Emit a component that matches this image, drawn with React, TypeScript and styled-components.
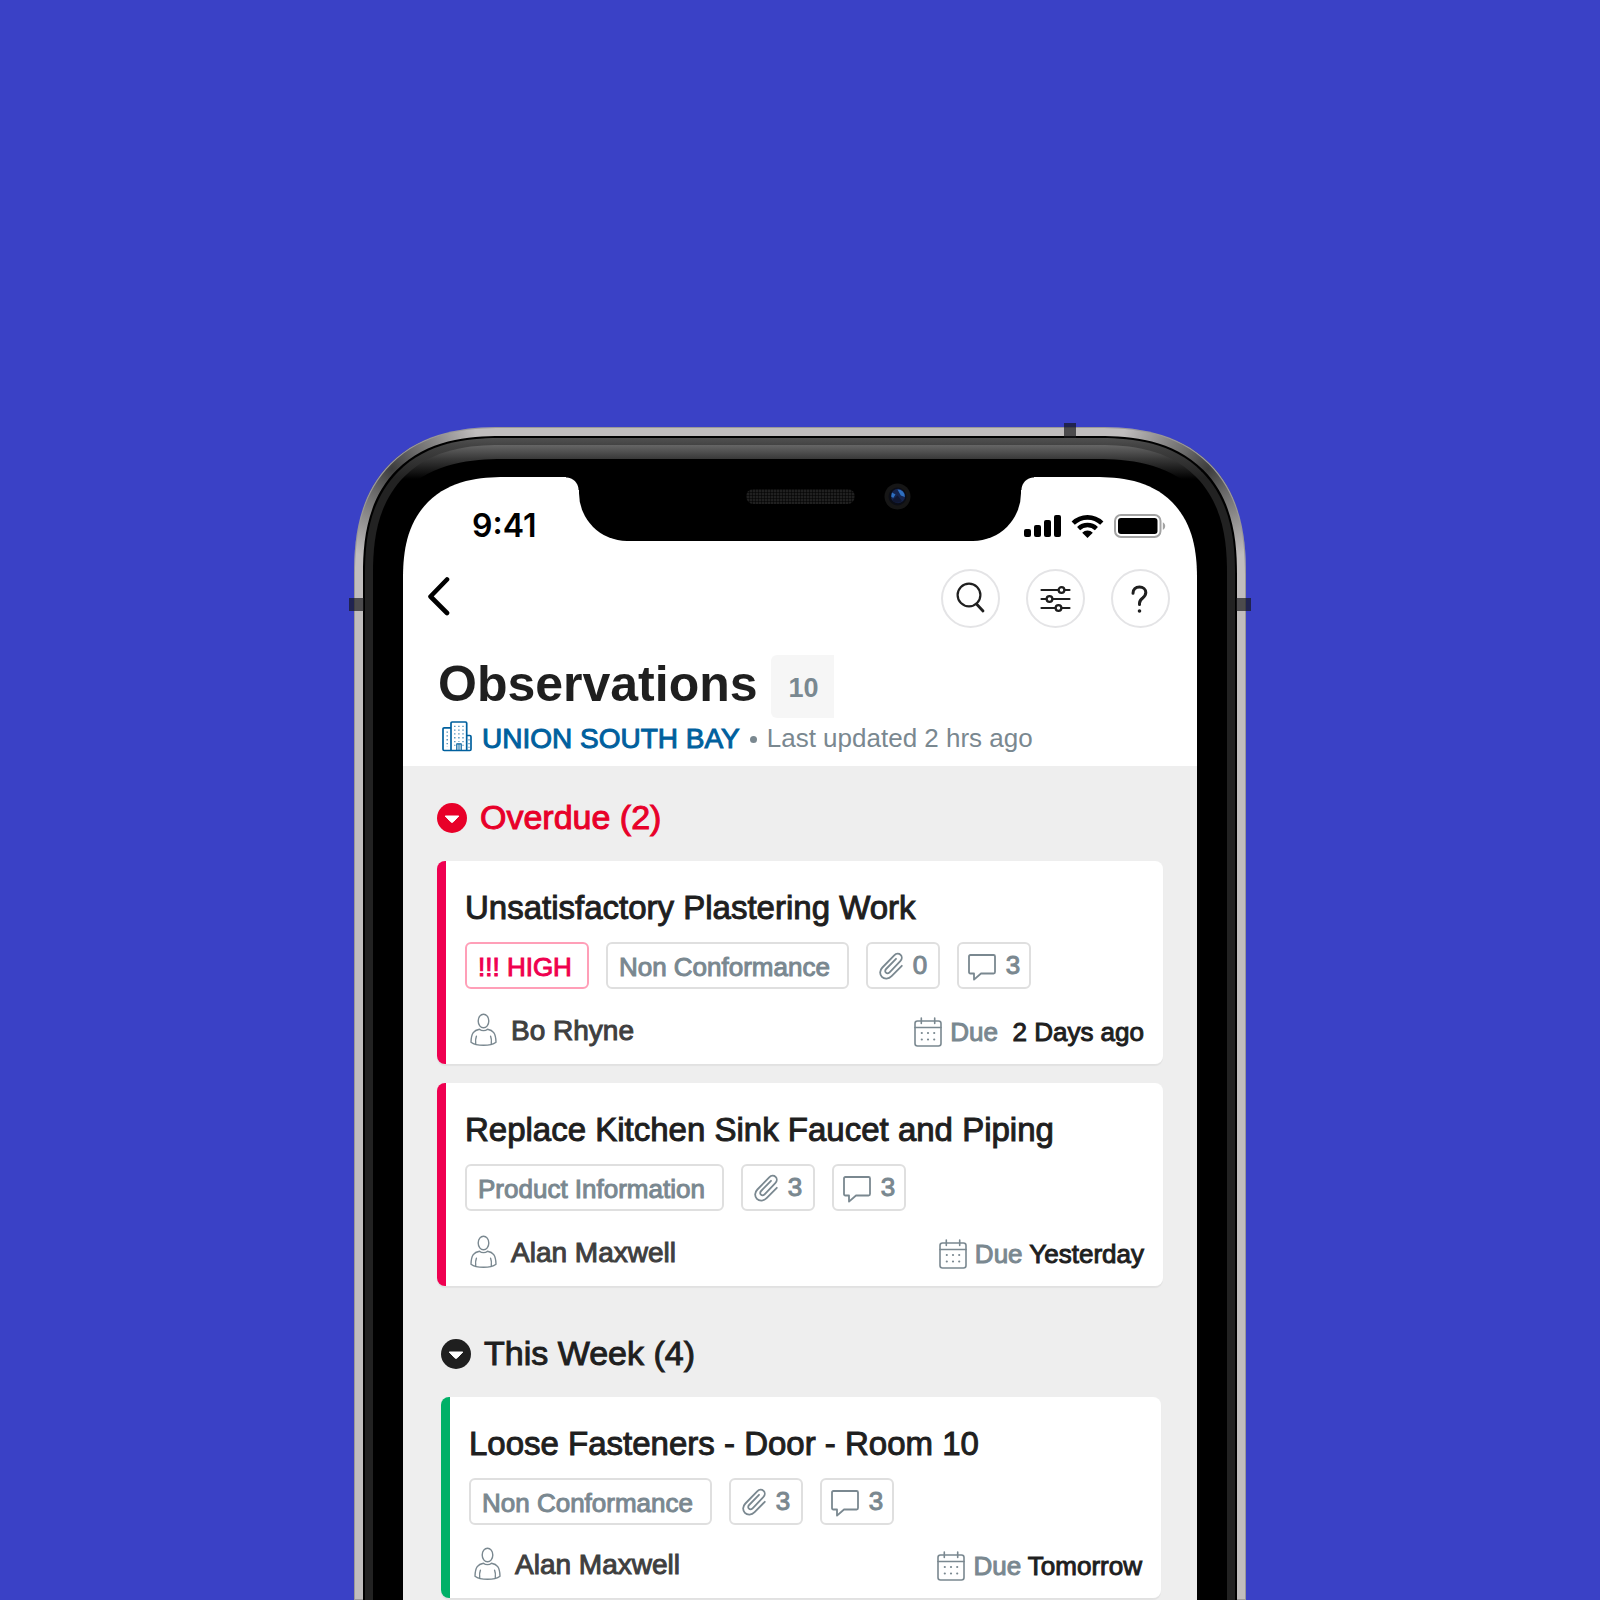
import React, { useState } from "react";
import styled, { createGlobalStyle } from "styled-components";

const color = {
  backdrop: "#3a41c6",
  ink: "#1f1f1f",
  name: "#3f3f3f",
  muted: "#7a8890",
  line: "#dfdfdf",
  link: "#00609e",
  overdue: "#e80029",
  high: "#ef0050",
  green: "#00b067",
  list: "#eeeeee",
};

const Global = createGlobalStyle`
  *, *::before, *::after { box-sizing: border-box; }
  body {
    margin: 0;
    background: ${color.backdrop};
    font-family: "Liberation Sans", Arial, Helvetica, sans-serif;
    color: ${color.ink};
  }
  h1, h2, h3, p, ul { margin: 0; padding: 0; font-weight: 400; }
  ul { list-style: none; }
  button { font: inherit; color: inherit; background: none; border: 0; padding: 0; cursor: pointer; }
  svg { display: block; flex: none; }
`;

/* ---------- device ---------- */

const Page = styled.main`
  min-height: 100vh;
  display: flex;
  flex-direction: column;
  align-items: center;
  padding-top: 427px;
  overflow: hidden;
`;

/* Continuous corners where the browser has them, plain round ones elsewhere. */
const Shell = styled.div<{ $round: number; $smooth: number }>`
  flex: 1;
  display: flex;
  min-width: 0;
  border-radius: ${({ $round }) => $round}px ${({ $round }) => $round}px 0 0;
  @supports (corner-shape: superellipse(1.3)) {
    border-radius: ${({ $smooth }) => $smooth}px ${({ $smooth }) => $smooth}px 0 0;
    corner-shape: superellipse(1.3);
  }
`;

const Metal = styled(Shell)`
  position: relative;
  width: 100%;
  max-width: 892px;
  padding: 9px 9px 0;
  background:
    radial-gradient(circle at 38px 42px, #3c3c3c 0, rgba(90, 90, 90, 0.85) 28px, rgba(150, 150, 150, 0) 92px),
    radial-gradient(circle at calc(100% - 38px) 42px, #3c3c3c 0, rgba(90, 90, 90, 0.85) 28px, rgba(150, 150, 150, 0) 92px),
    #c0bdbd;
  box-shadow: inset 0 0 0 1px #9a9898;
`;

const Band = styled.span<{ $side: "left" | "right" | "top" }>`
  position: absolute;
  background: rgba(20, 20, 24, 0.68);
  ${({ $side }) =>
    $side === "top"
      ? "top: -4px; right: 170px; width: 12px; height: 15px;"
      : `top: 171px; ${$side}: -5px; width: 15px; height: 13px;`}
`;

const Ring = styled(Shell)`
  padding: 7px 8px 0;
  border: 2px solid #000;
  border-bottom: 0;
  background: linear-gradient(#505050 0, #424242 8px, #222222 40px);
`;

const Gloss = styled(Shell)`
  padding-top: 14px;
  background: linear-gradient(#666666 0, #383838 14px, #000000 34px);
`;

const Glass = styled(Shell)`
  padding: 18px 30px 0;
  background: #000;
`;

const Screen = styled(Shell)`
  position: relative;
  flex-direction: column;
  background: #fff;
  overflow: hidden;
`;

const Notch = styled.div`
  position: absolute;
  top: 0;
  left: 50%;
  width: 442px;
  height: 64px;
  transform: translateX(-50%);
  border-radius: 0 0 48px 48px;
  background: #000;
  &::before,
  &::after {
    content: "";
    position: absolute;
    top: 0;
    width: 13px;
    height: 13px;
  }
  &::before {
    right: 100%;
    background: radial-gradient(circle at 0 100%, transparent 12px, #000 13px);
  }
  &::after {
    left: 100%;
    background: radial-gradient(circle at 100% 100%, transparent 12px, #000 13px);
  }
`;

const Speaker = styled.span`
  position: absolute;
  top: 12px;
  left: 167px;
  width: 109px;
  height: 15px;
  border-radius: 8px;
  background:
    repeating-linear-gradient(90deg, rgba(0, 0, 0, 0.5) 0 1px, transparent 1px 3px),
    repeating-linear-gradient(rgba(0, 0, 0, 0.5) 0 1px, transparent 1px 3px),
    #202020;
`;

const Camera = styled.svg`
  position: absolute;
  top: 6px;
  left: 305px;
`;

/* ---------- header ---------- */

const StatusBar = styled.div`
  display: flex;
  align-items: center;
  justify-content: space-between;
  padding: 32px 30px 0 69px;
`;

const Time = styled.time`
  font: 600 32px/34px Inter, "Liberation Sans", sans-serif;
  color: #000;
`;

const Signals = styled.div`
  display: flex;
  align-items: center;
  gap: 10px;
`;

const Nav = styled.nav`
  display: flex;
  align-items: center;
  justify-content: space-between;
  padding: 26px 27px 0 24px;
`;

const Actions = styled.div`
  display: flex;
  gap: 26px;
`;

const RoundButton = styled.button`
  display: grid;
  place-items: center;
  width: 59px;
  height: 59px;
  border: 2px solid #e4e4e6;
  border-radius: 50%;
`;

const BackButton = styled.button`
  padding-bottom: 5px;
`;

const TitleRow = styled.div`
  display: flex;
  gap: 13px;
  padding: 27px 34px 0 35px;
`;

const Title = styled.h1`
  font-size: 50px;
  line-height: 58px;
  font-weight: 700;
`;

const Total = styled.span`
  width: 63px;
  height: 63px;
  padding: 3px 0 0 3px;
  border-radius: 6px 0 0 6px;
  background: #f6f6f6;
  color: ${color.muted};
  font-size: 27px;
  line-height: 60px;
  font-weight: 700;
  text-align: center;
`;

const ProjectRow = styled.div`
  display: flex;
  align-items: center;
  height: 48px;
  padding: 0 34px 6px 39px;
`;

const ProjectLink = styled.a`
  display: flex;
  align-items: center;
  gap: 10px;
  color: ${color.link};
  font-size: 28px;
  line-height: 36px;
  text-decoration: none;
  -webkit-text-stroke: 1px;
`;

const Dot = styled.span`
  width: 7px;
  height: 7px;
  margin: 0 10px;
  border-radius: 50%;
  background: ${color.muted};
`;

const Updated = styled.p`
  color: ${color.muted};
  font-size: 26px;
  line-height: 34px;
  padding-bottom: 2px;
`;

/* ---------- list ---------- */

const List = styled.div`
  flex: 1;
  display: flex;
  flex-direction: column;
  gap: 47px;
  padding-top: 31px;
  background: ${color.list};
`;

const Section = styled.section<{ $inset: boolean }>`
  padding: ${({ $inset }) => ($inset ? "0 36px 0 38px" : "0 34px")};
`;

const SectionToggle = styled.button<{ $tone: string }>`
  display: flex;
  align-items: center;
  gap: 13px;
  height: 41px;
  color: ${({ $tone }) => $tone};
  font-size: 34px;
  line-height: 38px;
  -webkit-text-stroke: 1px;
`;

const SectionLabel = styled.span`
  padding-bottom: 2px;
`;

const Cards = styled.ul`
  display: flex;
  flex-direction: column;
  gap: 19px;
  margin-top: 23px;
`;

const Card = styled.li<{ $stripe: string }>`
  display: flex;
  border-radius: 8px;
  background: linear-gradient(90deg, ${({ $stripe }) => $stripe} 9px, #fff 9px);
  box-shadow: 0 2px 1px rgba(0, 0, 0, 0.05);
`;

const CardBody = styled.article`
  flex: 1;
  min-width: 0;
  padding: 27px 19px 15px 28px;
`;

const CardTitle = styled.h3`
  font-size: 33px;
  line-height: 40px;
  -webkit-text-stroke: 1px;
`;

const Tags = styled.div`
  display: flex;
  flex-wrap: wrap;
  gap: 17px;
  margin-top: 14px;
`;

const Tag = styled.span<{ $high?: boolean }>`
  height: 47px;
  border: 2px solid ${({ $high }) => ($high ? "#ff9fb8" : color.line)};
  border-radius: 6px;
  padding: 2px 11px 0;
  color: ${({ $high }) => ($high ? color.high : color.muted)};
  font-size: 26px;
  line-height: 43px;
  -webkit-text-stroke: 1px;
  ${({ $high }) => ($high ? "padding-right: 15px;" : "padding-right: 17px;")}
`;

const Count = styled.button`
  display: flex;
  align-items: center;
  justify-content: center;
  gap: 10px;
  width: 74px;
  height: 47px;
  border: 2px solid ${color.line};
  border-radius: 6px;
  color: ${color.muted};
  font-size: 26px;
  line-height: 40px;
  -webkit-text-stroke: 1px;
`;

const CountValue = styled.span`
  padding-bottom: 2px;
`;

const Meta = styled.div<{ $dense: boolean }>`
  display: flex;
  align-items: center;
  justify-content: space-between;
  height: 36px;
  margin-top: ${({ $dense }) => ($dense ? 22 : 24)}px;
  padding-left: 5px;
  -webkit-text-stroke: 1px;
`;

const Person = styled.p`
  display: flex;
  align-items: center;
  gap: 14px;
  color: ${color.name};
  font-size: 28px;
  line-height: 36px;
`;

const Due = styled.p`
  display: flex;
  align-items: center;
  gap: 8px;
  padding-top: 2px;
  color: ${color.muted};
  font-size: 26px;
  line-height: 36px;
  white-space: pre;
`;

const When = styled.span`
  color: ${color.ink};
`;

/* ---------- icons ---------- */

const SignalIcon = () => (
  <svg width="37" height="24" viewBox="0 0 37 24" aria-hidden="true">
    <rect x="0" y="15" width="7" height="8" rx="2" />
    <rect x="10" y="11" width="7" height="12" rx="2" />
    <rect x="20" y="6" width="7" height="17" rx="2" />
    <rect x="30" y="1" width="7" height="22" rx="2" />
  </svg>
);

const WifiIcon = () => (
  <svg width="33" height="24" viewBox="0 0 33 24" aria-hidden="true">
    <path d="M2.2 9.2a20.4 20.4 0 0 1 28.6 0" fill="none" stroke="#000" strokeWidth="4.6" />
    <path d="M7.6 14.6a12.8 12.8 0 0 1 17.8 0" fill="none" stroke="#000" strokeWidth="4.4" />
    <path d="M11.2 18.7a7.8 7.8 0 0 1 10.6 0L16.5 24z" />
  </svg>
);

const BatteryIcon = () => (
  <svg width="53" height="24" viewBox="0 0 53 24" aria-hidden="true">
    <rect x="1" y="1" width="45.5" height="22" rx="6" fill="none" stroke="#a3a3a3" strokeWidth="2" />
    <rect x="4" y="4" width="39.5" height="16" rx="3" />
    <path d="M48.8 8.2c3.2 1.6 3.2 6 0 7.6z" fill="#a3a3a3" />
  </svg>
);

const BackIcon = () => (
  <svg width="24" height="40" viewBox="0 0 24 40" fill="none" stroke="#000" strokeWidth="4.6" strokeLinecap="round" strokeLinejoin="round" aria-hidden="true">
    <path d="M20 3.5 3.5 20.500 20 37" />
  </svg>
);

const SearchIcon = () => (
  <svg width="32" height="34" viewBox="0 0 32 34" fill="none" stroke={color.ink} strokeLinecap="round" aria-hidden="true">
    <circle cx="14" cy="13" r="11.4" strokeWidth="2.2" />
    <path d="m21.500 22 6.500 7" strokeWidth="2.8" />
  </svg>
);

const FilterIcon = () => (
  <svg width="31" height="26" viewBox="0 0 31 26" fill="none" stroke={color.ink} strokeWidth="2.200" strokeLinecap="round" aria-hidden="true">
    <path d="M1.500 4h17M24.500 4h5M1.500 13h5M12.500 13h17M1.500 22h14M21.500 22h8" />
    <circle cx="21.500" cy="4" r="2.900" />
    <circle cx="9.500" cy="13" r="2.900" />
    <circle cx="18.500" cy="22" r="2.900" />
  </svg>
);

const HelpIcon = () => (
  <svg width="19" height="28" viewBox="0 0 19 28" fill="none" stroke={color.ink} strokeWidth="3" strokeLinecap="round" strokeLinejoin="round" aria-hidden="true">
    <path d="M2 8.200C2 4.200 4.700 2 8.500 2c3.600 0 6.300 2.300 6.300 5.600 0 2.600-1.300 3.900-3.100 5.400-1.900 1.500-3.200 2.600-3.200 5.200v1.300" />
    <circle cx="8.500" cy="26" r="0.800" fill={color.ink} strokeWidth="2" />
  </svg>
);

const BuildingIcon = () => (
  <svg width="30" height="36" viewBox="0 0 30 36" fill="none" stroke={color.link} strokeWidth="1.700" strokeLinejoin="round" aria-hidden="true">
    <path d="M9 29.500V2.200Q9 1 10.200 1h13.300q1.200 0 1.200 1.200v27.300" />
    <path d="M9 6.800H2.200Q1 6.800 1 8v20.300q0 1.200 1.200 1.200h25.600q1.200 0 1.200-1.200V15.700q0-1.200-1.200-1.200h-3.100" />
    <path d="M14.800 29v-6.200h4.400V29" strokeWidth="1.200" />
    <path d="M17 29v-6" strokeWidth="1" />
    <g strokeWidth="1.300" strokeDasharray="1.300 2.500" opacity="0.750">
      <path d="M12.800 4.700v20M16.900 4.700v16M21 4.700v20" />
      <path d="M5.200 10.500v15.500M27 18.200v8.500" />
    </g>
  </svg>
);

const CaretIcon = () => (
  <svg width="30" height="30" viewBox="0 0 30 30" aria-hidden="true">
    <circle cx="15" cy="15" r="15" fill="currentColor" />
    <path d="M8.200 13h13.600L16.300 18.800q-1.300 1.200-2.600 0z" fill="#fff" stroke="#fff" strokeWidth="1" strokeLinejoin="round" />
  </svg>
);

const ClipIcon = () => (
  <svg width="24" height="28" viewBox="0 0 24 28" fill="none" stroke={color.muted} strokeWidth="1.800" strokeLinecap="round" strokeLinejoin="round" aria-hidden="true">
    <path d="M22.800 13.800 12.600 24.200c-3 3-7.300 3-9.700.6s-2.400-6.400.5-9.300L15.200 3.300c2-2 4.800-2 6.400-.4s1.600 4.300-.3 6.300L10.600 20.300c-1.200 1.200-2.700 1.300-3.700.4s-1-2.500.2-3.700L17 6.800" />
  </svg>
);

const CommentIcon = () => (
  <svg width="28" height="30" viewBox="0 -3 28 30" fill="none" stroke={color.muted} strokeWidth="1.800" strokeLinejoin="round" aria-hidden="true">
    <path d="M2.400 1h23.200Q27 1 27 2.400v15.700q0 1.400-1.400 1.400H13L6 25.600v-6.100H2.400Q1 19.500 1 18.100V2.400Q1 1 2.400 1z" />
  </svg>
);

const PersonIcon = () => (
  <svg width="27" height="36" viewBox="0 0 27 36" fill="none" stroke={color.muted} strokeWidth="1.400" strokeLinecap="round" strokeLinejoin="round" aria-hidden="true">
    <ellipse cx="13.500" cy="8" rx="5.300" ry="6.800" />
    <path d="M9.500 16.200C4 17.200 1.200 20 1 29.200c2.600 2 7.300 3.100 12.500 3.100S23.400 31.200 26 29.200C25.800 20 23 17.200 17.500 16.200c-1 .9-2.400 1.400-4 1.400s-3-.500-4-1.400z" />
    <path d="M6.400 23.200c-.9 2-1 4.600-.700 7.700M20.600 23.200c.9 2 1 4.600.700 7.700" />
  </svg>
);

const CalendarIcon = () => (
  <svg width="28" height="30" viewBox="0 0 28 30" fill="none" stroke={color.muted} strokeWidth="1.600" strokeLinecap="round" aria-hidden="true">
    <rect x="1" y="4" width="26" height="25" rx="2.500" />
    <path d="M1 10.500h26M7.300 1v5.500M20.700 1v5.500" />
    <path d="M7.800 16h.01M14 16h.01M20.200 16h.01M7.800 22.500h.01M14 22.500h.01M20.200 22.500h.01" strokeWidth="2.200" />
  </svg>
);

const CameraLens = () => (
  <Camera width="27" height="27" viewBox="0 0 27 27" aria-hidden="true">
    <circle cx="13.500" cy="13.500" r="13" fill="#161616" />
    <circle cx="13.500" cy="13.500" r="9" fill="#0b0d16" />
    <circle cx="14" cy="13" r="7.200" fill="#14244f" />
    <path d="M13.500 6.500a7 7 0 0 1 7.300 7.500l-4-1.500zM8 9.500l3.500 2-2.300 3.500-2-1.500z" fill="#2e6fc0" />
    <path d="M8 17.500l5.500-5 4.500 5.500a7 7 0 0 1-10-.5z" fill="#101731" />
  </Camera>
);

/* ---------- content ---------- */

type Item = {
  title: string;
  high?: boolean;
  kind: string;
  files: number;
  comments: number;
  person: string;
  due: string;
};

type Group = { label: string; tone: string; stripe: string; inset: boolean; items: Item[] };

const groups: Group[] = [
  {
    label: "Overdue (2)",
    tone: color.overdue,
    stripe: color.high,
    inset: false,
    items: [
      { title: "Unsatisfactory Plastering Work", high: true, kind: "Non Conformance", files: 0, comments: 3, person: "Bo Rhyne", due: " 2 Days ago" },
      { title: "Replace Kitchen Sink Faucet and Piping", kind: "Product Information", files: 3, comments: 3, person: "Alan Maxwell", due: "Yesterday" },
    ],
  },
  {
    label: "This Week (4)",
    tone: color.ink,
    stripe: color.green,
    inset: true,
    items: [
      { title: "Loose Fasteners - Door - Room 10", kind: "Non Conformance", files: 3, comments: 3, person: "Alan Maxwell", due: "Tomorrow" },
    ],
  },
];

function ObservationGroup({ group }: { group: Group }) {
  const [open, setOpen] = useState(true);
  return (
    <Section $inset={group.inset}>
      <h2>
        <SectionToggle type="button" $tone={group.tone} aria-expanded={open} onClick={() => setOpen(!open)}>
          <CaretIcon />
          <SectionLabel>{group.label}</SectionLabel>
        </SectionToggle>
      </h2>
      {open && (
        <Cards>
          {group.items.map((item) => (
            <Card key={item.title} $stripe={group.stripe}>
              <CardBody>
                <CardTitle>{item.title}</CardTitle>
                <Tags>
                  {item.high && <Tag $high>!!! HIGH</Tag>}
                  <Tag>{item.kind}</Tag>
                  <Count type="button">
                    <ClipIcon />
                    <CountValue>{item.files}</CountValue>
                  </Count>
                  <Count type="button">
                    <CommentIcon />
                    <CountValue>{item.comments}</CountValue>
                  </Count>
                </Tags>
                <Meta $dense={group.inset}>
                  <Person>
                    <PersonIcon />
                    {item.person}
                  </Person>
                  <Due>
                    <CalendarIcon />
                    <span>
                      Due <When>{item.due}</When>
                    </span>
                  </Due>
                </Meta>
              </CardBody>
            </Card>
          ))}
        </Cards>
      )}
    </Section>
  );
}

export default function App() {
  return (
    <>
      <Global />
      <Page>
        <Metal $round={125} $smooth={148}>
          <Ring $round={117} $smooth={138}>
            <Gloss $round={108} $smooth={128}>
              <Glass $round={110} $smooth={130}>
                <Screen $round={86} $smooth={102}>
                  <Notch>
                    <Speaker />
                    <CameraLens />
                  </Notch>
                  <header>
                    <StatusBar>
                      <Time>9:41</Time>
                      <Signals>
                        <SignalIcon />
                        <WifiIcon />
                        <BatteryIcon />
                      </Signals>
                    </StatusBar>
                    <Nav>
                      <BackButton type="button" aria-label="Back">
                        <BackIcon />
                      </BackButton>
                      <Actions>
                        <RoundButton type="button" aria-label="Search">
                          <SearchIcon />
                        </RoundButton>
                        <RoundButton type="button" aria-label="Filter">
                          <FilterIcon />
                        </RoundButton>
                        <RoundButton type="button" aria-label="Help">
                          <HelpIcon />
                        </RoundButton>
                      </Actions>
                    </Nav>
                    <TitleRow>
                      <Title>Observations</Title>
                      <Total>10</Total>
                    </TitleRow>
                    <ProjectRow>
                      <ProjectLink href="#project">
                        <BuildingIcon />
                        UNION SOUTH BAY
                      </ProjectLink>
                      <Dot />
                      <Updated>Last updated 2 hrs ago</Updated>
                    </ProjectRow>
                  </header>
                  <List>
                    {groups.map((group) => (
                      <ObservationGroup key={group.label} group={group} />
                    ))}
                  </List>
                </Screen>
              </Glass>
            </Gloss>
          </Ring>
          <Band $side="left" />
          <Band $side="right" />
          <Band $side="top" />
        </Metal>
      </Page>
    </>
  );
}
